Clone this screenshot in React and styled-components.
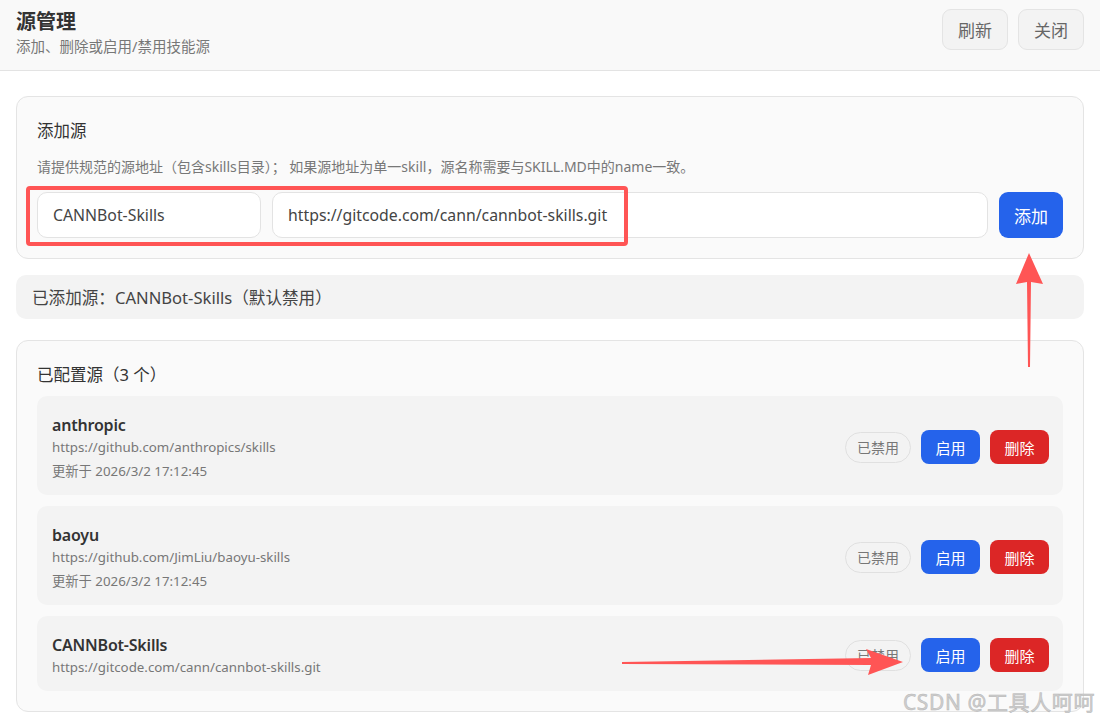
import React from 'react';
import styled, { createGlobalStyle } from 'styled-components';

const GlobalStyle = createGlobalStyle`
    html, body {
        margin: 0;
        padding: 0;
        background: #fff;
    }
    body {
        font-family: "Noto Sans", "Noto Sans CJK SC", sans-serif;
        color: #333;
    }
    * { box-sizing: border-box; }
`;

const Page = styled.div`
    position: relative;
    width: 1100px;
    height: 721px;
    overflow: hidden;
    background: #fff;
`;

const Header = styled.header`
    height: 71px;
    display: flex;
    justify-content: space-between;
    align-items: flex-start;
    padding: 9px 16px 0 16px;
    background: #f9f9f9;
    border-bottom: 1px solid #e3e3e3;
`;

const HeaderText = styled.div`
    display: flex;
    flex-direction: column;
`;

const Title = styled.h1`
    margin: 0;
    font-size: 20px;
    line-height: 26px;
    font-weight: 700;
    color: #333;
`;

const Subtitle = styled.p`
    margin: 1px 0 0;
    font-size: 14.5px;
    line-height: 20px;
    color: #777;
`;

const HeaderActions = styled.div`
    display: flex;
    gap: 10px;
`;

const GhostButton = styled.button`
    width: 66px;
    height: 41px;
    border: 1px solid #e4e4e4;
    border-radius: 9px;
    background: #f3f3f3;
    color: #666;
    font-family: inherit;
    font-size: 17px;
`;

const Main = styled.main`
    padding: 25px 16px 0;
    display: flex;
    flex-direction: column;
`;

const Card = styled.section`
    background: #fafafa;
    border: 1px solid #e4e4e4;
    border-radius: 12px;
    padding: 23px 20px 20px;
`;

const CardTitle = styled.h2`
    margin: 0;
    font-size: 16.5px;
    line-height: 22px;
    font-weight: 400;
    color: #333;
`;

const Hint = styled.p`
    margin: 15px 0 15px;
    font-size: 14px;
    line-height: 20px;
    color: #777;
`;

const FormRow = styled.div`
    display: flex;
    gap: 11px;
`;

const Input = styled.input`
    height: 46px;
    width: ${p => (p.$grow ? 'auto' : '224px')};
    flex: ${p => (p.$grow ? '1' : 'none')};
    border: 1px solid #e3e3e3;
    border-radius: 10px;
    background: #fff;
    padding: 0 15px;
    font-family: inherit;
    font-size: 15.8px;
    color: #444;
    outline: none;
`;

const PrimaryButton = styled.button`
    width: 64px;
    height: 46px;
    border: none;
    border-radius: 9px;
    background: #2563eb;
    color: #fff;
    font-family: inherit;
    font-size: 17px;
`;

const Banner = styled.div`
    margin: 16px 0 21px;
    height: 44px;
    display: flex;
    align-items: center;
    padding: 0 16px;
    background: #f3f3f3;
    border-radius: 10px;
    font-size: 16.6px;
    color: #444;
`;

const List = styled.div`
    margin-top: 10px;
    display: flex;
    flex-direction: column;
    gap: 11px;
`;

const Item = styled.div`
    display: flex;
    justify-content: space-between;
    align-items: center;
    padding: 18px 14px 15px 15px;
    background: #f3f3f3;
    border-radius: 10px;
`;

const ItemInfo = styled.div`
    display: flex;
    flex-direction: column;
`;

const ItemName = styled.div`
    font-size: 16px;
    line-height: 22px;
    font-weight: 600;
    color: #333;
    letter-spacing: -0.2px;
`;

const ItemMeta = styled.div`
    font-size: 13.3px;
    line-height: 18px;
    color: #777;
    margin-top: ${p => p.$gap || 2}px;
`;

const ItemActions = styled.div`
    display: flex;
    align-items: center;
    gap: 10px;
`;

const Badge = styled.span`
    height: 31px;
    padding: 0 11px;
    display: flex;
    align-items: center;
    border: 1px solid #e0e0e0;
    border-radius: 16px;
    font-size: 14px;
    color: #777;
`;

const SmallButton = styled.button`
    width: 59px;
    height: 34px;
    border: none;
    border-radius: 8px;
    background: ${p => (p.$danger ? '#dc2626' : '#2563eb')};
    color: #fff;
    font-family: inherit;
    font-size: 15px;
`;

const Overlay = styled.svg`
    position: absolute;
    inset: 0;
    pointer-events: none;
`;

const Watermark = styled.div`
    position: absolute;
    right: 5px;
    bottom: 5px;
    font-size: 21px;
    letter-spacing: 0.6px;
    color: #cfcfcf;
    -webkit-text-stroke: 0.5px #b5b5b5;
`;

const sources = [
    { name: 'anthropic', url: 'https://github.com/anthropics/skills', updated: '更新于 2026/3/2 17:12:45' },
    { name: 'baoyu', url: 'https://github.com/JimLiu/baoyu-skills', updated: '更新于 2026/3/2 17:12:45' },
    { name: 'CANNBot-Skills', url: 'https://gitcode.com/cann/cannbot-skills.git' },
];

const App = () => {
    return (
        <Page>
            <GlobalStyle />
            <Header>
                <HeaderText>
                    <Title>源管理</Title>
                    <Subtitle>添加、删除或启用/禁用技能源</Subtitle>
                </HeaderText>
                <HeaderActions>
                    <GhostButton>刷新</GhostButton>
                    <GhostButton>关闭</GhostButton>
                </HeaderActions>
            </Header>
            <Main>
                <Card>
                    <CardTitle>添加源</CardTitle>
                    <Hint>请提供规范的源地址（包含skills目录）； 如果源地址为单一skill，源名称需要与SKILL.MD中的name一致。</Hint>
                    <FormRow>
                        <Input defaultValue='CANNBot-Skills' />
                        <Input $grow defaultValue='https://gitcode.com/cann/cannbot-skills.git' />
                        <PrimaryButton>添加</PrimaryButton>
                    </FormRow>
                </Card>
                <Banner>已添加源：CANNBot-Skills（默认禁用）</Banner>
                <Card>
                    <CardTitle>已配置源（3 个）</CardTitle>
                    <List>
                        {sources.map(s => (
                            <Item key={s.name}>
                                <ItemInfo>
                                    <ItemName>{s.name}</ItemName>
                                    <ItemMeta>{s.url}</ItemMeta>
                                    {s.updated && <ItemMeta $gap={6}>{s.updated}</ItemMeta>}
                                </ItemInfo>
                                <ItemActions>
                                    <Badge>已禁用</Badge>
                                    <SmallButton>启用</SmallButton>
                                    <SmallButton $danger>删除</SmallButton>
                                </ItemActions>
                            </Item>
                        ))}
                    </List>
                </Card>
            </Main>

            {/* annotation marks drawn over the screenshot */}
            <Overlay width='1100' height='721' viewBox='0 0 1100 721'>
                <rect x='28' y='188' width='598' height='56' rx='2' fill='none' stroke='#ff5555' strokeWidth='4' />
                <polygon points='1029,253 1043,284 1031,282 1030,367 1028,367 1027,282 1016,284' fill='#ff5555' />
                <polygon points='903,662 868,675 871,665 622,664 622,662 871,658 866,649' fill='#ff5555' />
            </Overlay>
            <Watermark>CSDN @工具人呵呵</Watermark>
        </Page>
    );
};

export default App;
